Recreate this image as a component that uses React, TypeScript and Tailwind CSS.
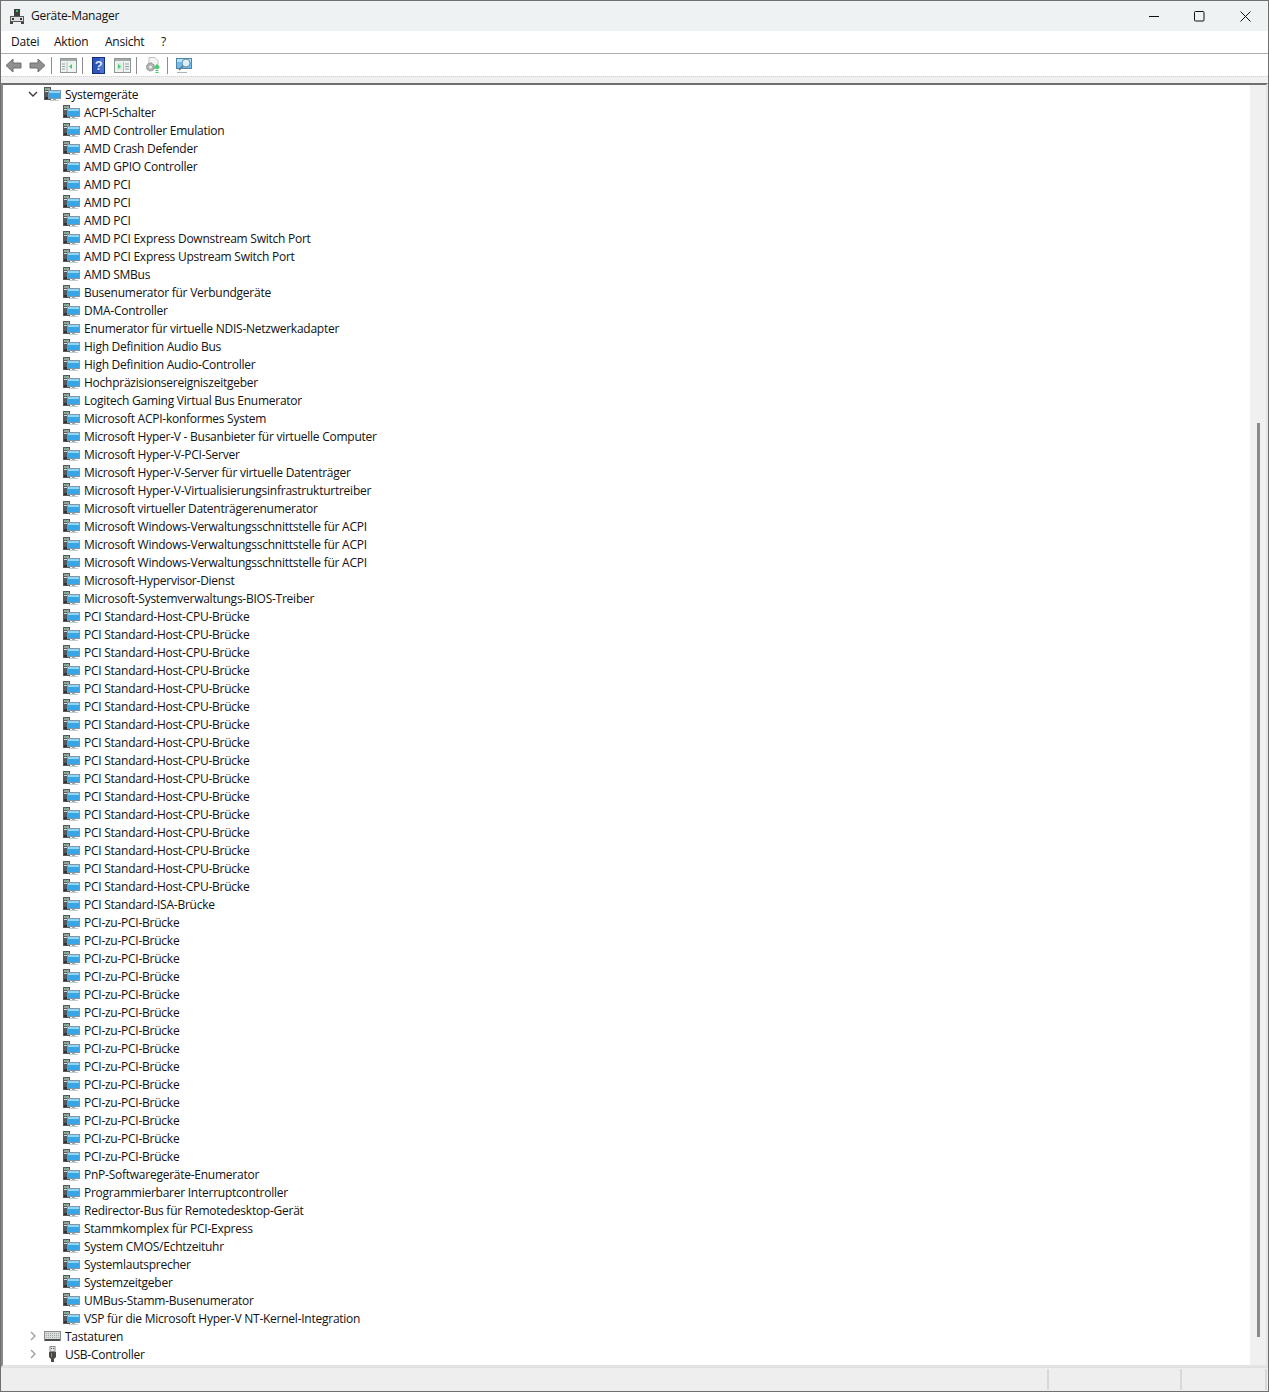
import React from 'react';

const pciHost = Array(16).fill('PCI Standard-Host-CPU-Brücke');
const pciPci = Array(14).fill('PCI-zu-PCI-Brücke');
const wmi = Array(3).fill('Microsoft Windows-Verwaltungsschnittstelle für ACPI');

const devices: string[] = [
  'ACPI-Schalter',
  'AMD Controller Emulation',
  'AMD Crash Defender',
  'AMD GPIO Controller',
  'AMD PCI',
  'AMD PCI',
  'AMD PCI',
  'AMD PCI Express Downstream Switch Port',
  'AMD PCI Express Upstream Switch Port',
  'AMD SMBus',
  'Busenumerator für Verbundgeräte',
  'DMA-Controller',
  'Enumerator für virtuelle NDIS-Netzwerkadapter',
  'High Definition Audio Bus',
  'High Definition Audio-Controller',
  'Hochpräzisionsereigniszeitgeber',
  'Logitech Gaming Virtual Bus Enumerator',
  'Microsoft ACPI-konformes System',
  'Microsoft Hyper-V - Busanbieter für virtuelle Computer',
  'Microsoft Hyper-V-PCI-Server',
  'Microsoft Hyper-V-Server für virtuelle Datenträger',
  'Microsoft Hyper-V-Virtualisierungsinfrastrukturtreiber',
  'Microsoft virtueller Datenträgerenumerator',
  ...wmi,
  'Microsoft-Hypervisor-Dienst',
  'Microsoft-Systemverwaltungs-BIOS-Treiber',
  ...pciHost,
  'PCI Standard-ISA-Brücke',
  ...pciPci,
  'PnP-Softwaregeräte-Enumerator',
  'Programmierbarer Interruptcontroller',
  'Redirector-Bus für Remotedesktop-Gerät',
  'Stammkomplex für PCI-Express',
  'System CMOS/Echtzeituhr',
  'Systemlautsprecher',
  'Systemzeitgeber',
  'UMBus-Stamm-Busenumerator',
  'VSP für die Microsoft Hyper-V NT-Kernel-Integration',
];

function SystemIcon() {
  return (
    <svg width="17" height="16" viewBox="0 0 17 16" className="shrink-0">
      <rect x="0" y="1" width="7" height="13" fill="#55595a" />
      <rect x="1" y="2" width="5" height="2" fill="#9fa5a2" />
      <rect x="2" y="2" width="2" height="1" fill="#46c46a" />
      <rect x="1" y="5" width="5" height="1" fill="#d9dcdc" />
      <rect x="1" y="11" width="5" height="2" fill="#2f3234" />
      <rect x="4.500" y="4.500" width="12" height="8" fill="#38a6e6" stroke="#7f98a8" />
      <rect x="5" y="5" width="11" height="2" fill="#8fd5f8" />
      <rect x="9" y="13" width="3" height="1" fill="#9aa8b0" />
      <rect x="6" y="14" width="9" height="1" fill="#c3cbd0" />
    </svg>
  );
}

function KeyboardIcon() {
  return (
    <svg width="17" height="16" viewBox="0 0 17 16" className="shrink-0">
      <rect x="0.500" y="3.500" width="16" height="9" fill="#d9dcdc" stroke="#8a8d8d" />
      <path d="M2 5.500h13M2 7.500h13M2 9.500h13" stroke="#a4a8a8" strokeDasharray="1 1" />
      <rect x="1" y="11" width="15" height="2" fill="#4a4c4c" />
    </svg>
  );
}

function UsbIcon() {
  return (
    <svg width="17" height="16" viewBox="0 0 17 16" className="shrink-0">
      <rect x="6" y="0.500" width="5" height="5" fill="#e6e6e6" stroke="#8c8c8c" />
      <rect x="7" y="2" width="1" height="1" fill="#555" />
      <rect x="9" y="2" width="1" height="1" fill="#555" />
      <path d="M5 6h7v5l-2 2v3H7v-3l-2-2z" fill="#4d4a44" />
      <rect x="7" y="7" width="1" height="4" fill="#8b8880" />
    </svg>
  );
}

function Chevron({ open }: { open?: boolean }) {
  return (
    <svg width="10" height="10" viewBox="0 0 10 10" className="shrink-0 self-center">
      {open ? (
        <path d="M1 3l4 4 4-4" fill="none" stroke="#3a3a3a" strokeWidth="1.4" />
      ) : (
        <path d="M3 1l4 4-4 4" fill="none" stroke="#a0a0a0" strokeWidth="1.4" />
      )}
    </svg>
  );
}

function Arrow({ right }: { right?: boolean }) {
  return (
    <svg width="17" height="15" viewBox="0 0 17 15" className="shrink-0">
      <path
        d={right ? 'M1 5h8V1l7 6.500-7 6.500v-4H1z' : 'M16 5H8V1L1 7.500 8 14v-4h8z'}
        fill="#8f918e"
        stroke="#6d6f6c"
      />
    </svg>
  );
}

function PaneIcon({ right }: { right?: boolean }) {
  return (
    <svg width="17" height="15" viewBox="0 0 17 15" className="shrink-0">
      <rect x="0.500" y="0.500" width="16" height="14" fill="#eef3f1" stroke="#8f9693" />
      <rect x="1" y="1" width="15" height="2" fill="#a3aaa7" />
      {right ? (
        <>
          <path d="M3 5v7h5V5z" fill="#dfe8e4" />
          <path d="M4 6l3 2.500-3 2.500z" fill="#3fd06a" />
          <path d="M11 6h4M11 8.500h4M11 11h4" stroke="#8fa3ad" />
          <path d="M9.500 4v10" stroke="#b6bdb9" />
        </>
      ) : (
        <>
          <path d="M2 6h3M2 8.500h3M2 11h3" stroke="#8fa3ad" />
          <path d="M12 6L9 8.500 12 11z" fill="#3fd06a" />
          <path d="M7 4v10" stroke="#b6bdb9" />
        </>
      )}
    </svg>
  );
}

function HelpIcon() {
  return (
    <svg width="13" height="17" viewBox="0 0 13 17" className="shrink-0">
      <rect width="13" height="17" fill="#142f7e" />
      <rect x="1" y="1" width="11" height="15" fill="#2f55b8" />
      <rect x="8" y="1" width="4" height="15" fill="#4a74d0" />
      <text x="6.500" y="13" textAnchor="middle" fontSize="13" fontWeight="700" fill="#dfe6f7" fontFamily="Liberation Sans, sans-serif">?</text>
    </svg>
  );
}

function UpdateIcon() {
  return (
    <svg width="16" height="17" viewBox="0 0 16 17" className="shrink-0">
      <path d="M4 0.500h6l3 3v8H4z" fill="#f3f3f3" stroke="#c2c2c2" />
      <circle cx="5.500" cy="10" r="4" fill="#b0b0b0" stroke="#8a8a8a" strokeDasharray="2 1" />
      <circle cx="5.500" cy="10" r="1.500" fill="#eeeeee" />
      <path d="M12 7l3.500 3.500H13.500v1.500h-3v-1.500H8.500z" fill="#3fd06a" />
      <rect x="10.500" y="13" width="3" height="1" fill="#3fd06a" />
      <rect x="10.500" y="15" width="3" height="1" fill="#3fd06a" />
    </svg>
  );
}

function ScanIcon() {
  return (
    <svg width="17" height="17" viewBox="0 0 17 17" className="shrink-0">
      <rect x="0.500" y="1.500" width="15" height="10" fill="#6cbdec" stroke="#4f86a8" />
      <rect x="1" y="2" width="14" height="3" fill="#b4e2f9" />
      <circle cx="10" cy="6" r="4" fill="#d9effa" stroke="#6e8ea3" />
      <path d="M7 9l-4 4" stroke="#6a6a6a" strokeWidth="1.500" />
      <path d="M1 15.500h10" stroke="#a8b4bb" />
    </svg>
  );
}

function Separator() {
  return <div className="h-[17px] w-px bg-[#8d8d8d] shrink-0" />;
}

function TreeRow({ label }: { label: string }) {
  return (
    <div className="flex h-[18px] pl-[60px]">
      <div className="flex self-center"><SystemIcon /></div>
      <span className="ml-[4px] whitespace-nowrap leading-[20px]">{label}</span>
    </div>
  );
}

function TopRow({ label, icon, open }: { label: string; icon: React.ReactNode; open?: boolean }) {
  return (
    <div className="flex h-[18px] pl-[25px]">
      <Chevron open={open} />
      <div className="ml-[6px] flex self-center">{icon}</div>
      <span className="ml-[4px] whitespace-nowrap leading-[20px]">{label}</span>
    </div>
  );
}

export default function App() {
  return (
    <div
      className="flex h-[1392px] w-[1269px] flex-col overflow-hidden border border-[#6f6f6f] bg-white text-[12px] leading-[18px] tracking-[-0.25px] text-[#111111]"
      style={{ fontFamily: '"Open Sans", "Noto Sans", sans-serif' }}
    >
      {/* title bar */}
      <div className="flex h-[30px] shrink-0 items-center bg-[#eef2f3] pl-[8px]">
        <svg width="16" height="16" viewBox="0 0 16 16" className="shrink-0">
          <rect x="5" y="1" width="6" height="7" fill="#3d3d3d" />
          <rect x="7" y="2" width="2" height="2" fill="#3fbf5f" />
          <rect x="1.500" y="8.500" width="13" height="5" fill="#dedede" stroke="#5a5a5a" />
          <rect x="3" y="10" width="2" height="2" fill="#333" />
          <rect x="11" y="10" width="2" height="2" fill="#333" />
          <rect x="1" y="14" width="3" height="2" fill="#444" />
          <rect x="12" y="14" width="3" height="2" fill="#444" />
        </svg>
        <span className="ml-[6px]">Geräte-Manager</span>
        <div className="ml-auto flex items-center">
          <div className="flex h-[30px] w-[46px] items-center justify-center">
            <svg width="11" height="11" viewBox="0 0 11 11"><path d="M0 5.500h10" stroke="#111" /></svg>
          </div>
          <div className="flex h-[30px] w-[45px] items-center justify-center">
            <svg width="11" height="11" viewBox="0 0 11 11"><rect x="0.500" y="0.500" width="9.500" height="9.500" rx="1" fill="none" stroke="#111" /></svg>
          </div>
          <div className="flex h-[30px] w-[46px] items-center justify-center">
            <svg width="11" height="11" viewBox="0 0 11 11"><path d="M0.500 0.500l10 10M10.500 0.500l-10 10" stroke="#111" /></svg>
          </div>
        </div>
      </div>

      {/* menu */}
      <div className="flex h-[23px] shrink-0 items-center border-b border-[#a9aeae] pl-[10px]">
        <span className="w-[43px]">Datei</span>
        <span className="w-[51px]">Aktion</span>
        <span className="w-[56px]">Ansicht</span>
        <span>?</span>
      </div>

      {/* toolbar */}
      <div className="flex h-[22px] shrink-0 items-center pl-[4px]">
        <Arrow />
        <div className="ml-[7px]"><Arrow right /></div>
        <div className="ml-[5px]"><Separator /></div>
        <div className="ml-[8px]"><PaneIcon /></div>
        <div className="ml-[5px]"><Separator /></div>
        <div className="ml-[9px]"><HelpIcon /></div>
        <div className="ml-[9px]"><PaneIcon right /></div>
        <div className="ml-[5px]"><Separator /></div>
        <div className="ml-[8px]"><UpdateIcon /></div>
        <div className="ml-[6px]"><Separator /></div>
        <div className="ml-[8px]"><ScanIcon /></div>
      </div>

      <div className="h-[7px] shrink-0 border-t border-dotted border-[#d0d0d0] bg-[#f0f0f0]" />

      {/* tree */}
      <div className="flex min-h-0 flex-1 border-t-2 border-l-2 border-r-2 border-b-2 border-t-[#6f6f6f] border-l-[#8a8a8a] border-r-[#e4e4e4] border-b-[#e4e4e4]">
        <div className="min-w-0 flex-1">
          <TopRow label="Systemgeräte" icon={<SystemIcon />} open />
          {devices.map((d, i) => (
            <TreeRow key={i} label={d} />
          ))}
          <TopRow label="Tastaturen" icon={<KeyboardIcon />} />
          <TopRow label="USB-Controller" icon={<UsbIcon />} />
        </div>
        <div className="flex w-[16px] shrink-0 justify-center bg-[#f0f0f0] pt-[338px]">
          <div className="h-[914px] w-[3px] bg-[#8a8a8a]" />
        </div>
      </div>

      {/* status bar */}
      <div className="flex h-[24px] shrink-0 items-stretch border-t border-[#e0e0e0] bg-[#eeeeee] py-[1px] pr-[1px]">
        <div className="flex-1" />
        <div className="w-[133px] border-l-2 border-[#d8d8d8]" />
        <div className="w-[87px] border-l-2 border-r-2 border-[#d8d8d8]" />
      </div>
    </div>
  );
}
